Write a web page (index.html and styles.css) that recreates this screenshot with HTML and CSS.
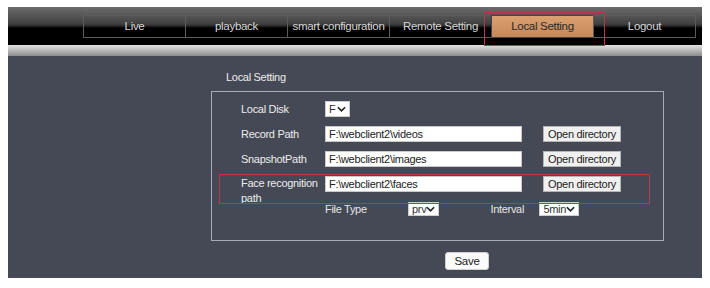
FILE: index.html
```html
<!DOCTYPE html>
<html lang="en">
<head>
  <meta charset="UTF-8" />
  <title>Local Setting</title>
  <link rel="stylesheet" href="styles.css">
</head>
<body>
  <div class="page">
    <div class="topbar">
      <ul class="nav">
        <li>Live</li>
        <li>playback</li>
        <li>smart configuration</li>
        <li>Remote Setting</li>
        <li class="active">Local Setting</li>
        <li>Logout</li>
      </ul>
      <div class="mark mark-tab"></div>
    </div>
    <div class="subbar"></div>

    <div class="main">
      <div class="section-title">Local Setting</div>

      <div class="box">
        <div class="grid">
          <label>Local Disk</label>
          <div class="cell">
            <span class="dropdown disk">F<svg viewBox="0 0 10 6"><path d="M1 1l4 4 4-4" /></svg></span>
          </div>
          <div></div>

          <label>Record Path</label>
          <div class="cell"><input type="text" value="F:\webclient2\videos"></div>
          <div class="cell"><button>Open directory</button></div>

          <label>SnapshotPath</label>
          <div class="cell"><input type="text" value="F:\webclient2\images"></div>
          <div class="cell"><button>Open directory</button></div>

          <label class="wrap">Face recognition path</label>
          <div class="cell"><input type="text" value="F:\webclient2\faces"></div>
          <div class="cell"><button>Open directory</button></div>

          <div></div>
          <div class="cell options">
            <span class="opt-label">File Type</span>
            <span class="dropdown type">prv<svg viewBox="0 0 10 6"><path d="M1 1l4 4 4-4" /></svg></span>
            <span class="opt-label interval">Interval</span>
            <span class="dropdown time">5min<svg viewBox="0 0 10 6"><path d="M1 1l4 4 4-4" /></svg></span>
          </div>
        </div>
        <div class="mark mark-row"></div>
      </div>

      <div class="save-row">
        <button class="save">Save</button>
      </div>
    </div>
  </div>
</body>
</html>
```

FILE: styles.css
```css
body {
  margin: 0;
  background: #fff;
  font-family: "Liberation Sans", Arial, sans-serif;
  font-size: 11px;
  letter-spacing: -0.3px;
}
.page {
  width: 694px;
  padding: 7px 8px 0 8px;
}
.topbar {
  position: relative;
  height: 38px;
  background: linear-gradient(#6b6b6b 0, #404040 45%, #1a1a1a 52%, #000 55%, #000 100%);
}
.nav {
  list-style: none;
  margin: 0;
  padding: 8px 0 0 75px;
  display: flex;
}
.nav li {
  width: 101px;
  height: 21px;
  line-height: 21px;
  text-align: center;
  color: #d6d6d6;
  font-size: 11.5px;
  border-top: 1px solid #5c5c5c;
  border-bottom: 1px solid #5c5c5c;
  border-left: 1px solid #5c5c5c;
  white-space: nowrap;
}
.nav li:last-child {
  border-right: 1px solid #5c5c5c;
}
.nav li.active {
  color: #2a2a2a;
  border-color: #444;
  background: linear-gradient(#dba070, #c5885a);
}
.mark {
  position: absolute;
  border: 1px solid #b83a46;
}
.mark-tab {
  left: 476px;
  top: 5px;
  width: 119px;
  height: 32px;
}
.subbar {
  height: 11px;
  background: linear-gradient(#e2e2e2, #b8b8b8 50%, #8c8c8c);
}
.main {
  height: 222px;
  background: #454955;
  color: #ececec;
  padding-top: 14px;
  box-sizing: border-box;
}
.section-title {
  margin-left: 218px;
  height: 21px;
  line-height: 14px;
}
.box {
  position: relative;
  margin-left: 203px;
  width: 451px;
  height: 148px;
  border: 1px solid #a8abb3;
}
.grid {
  display: grid;
  grid-template-columns: 84px 218px 1fr;
  grid-auto-rows: 25px;
  padding: 4px 0 0 29px;
}
.grid label {
  display: flex;
  align-items: center;
  white-space: nowrap;
}
.grid label.wrap {
  display: block;
  white-space: normal;
  line-height: 15px;
  padding-top: 5px;
}
.cell {
  display: flex;
  align-items: center;
}
input {
  width: 197px;
  height: 16px;
  box-sizing: border-box;
  border: 1px solid #c8c8c8;
  padding: 0 3px;
  font: 11px "Liberation Sans", Arial, sans-serif;
  letter-spacing: -0.3px;
  color: #222;
  background: #fff;
}
button {
  font: 11px "Liberation Sans", Arial, sans-serif;
  letter-spacing: -0.3px;
  color: #222;
  background: #f0f0f0;
  border: 1px solid #b5b5b5;
  height: 16px;
  width: 78px;
  padding: 0;
  line-height: 14px;
  white-space: nowrap;
}
.dropdown {
  display: flex;
  align-items: center;
  justify-content: space-between;
  height: 16px;
  box-sizing: border-box;
  background: #fff;
  color: #333;
  padding: 0 3px;
  border: 1px solid #ccc;
}
.dropdown svg {
  width: 9px;
  height: 6px;
  fill: none;
  stroke: #222;
  stroke-width: 1.8;
}
.disk {
  width: 25px;
}
.type {
  width: 32px;
  height: 14px;
}
.time {
  width: 45px;
  height: 14px;
}
.opt-label {
  width: 83px;
  flex: none;
  white-space: nowrap;
  color: #e6e6e6;
}
.interval {
  margin-left: 51px;
  width: 49px;
}
.mark-row {
  left: 7px;
  top: 82px;
  width: 429px;
  height: 28px;
}
.save-row {
  padding: 11px 0 0 437px;
}
.save {
  width: 44px;
  height: 18px;
  background: #fafafa;
  border: 1px solid #d0d0d0;
  border-radius: 3px;
  font-size: 11.5px;
}
```
